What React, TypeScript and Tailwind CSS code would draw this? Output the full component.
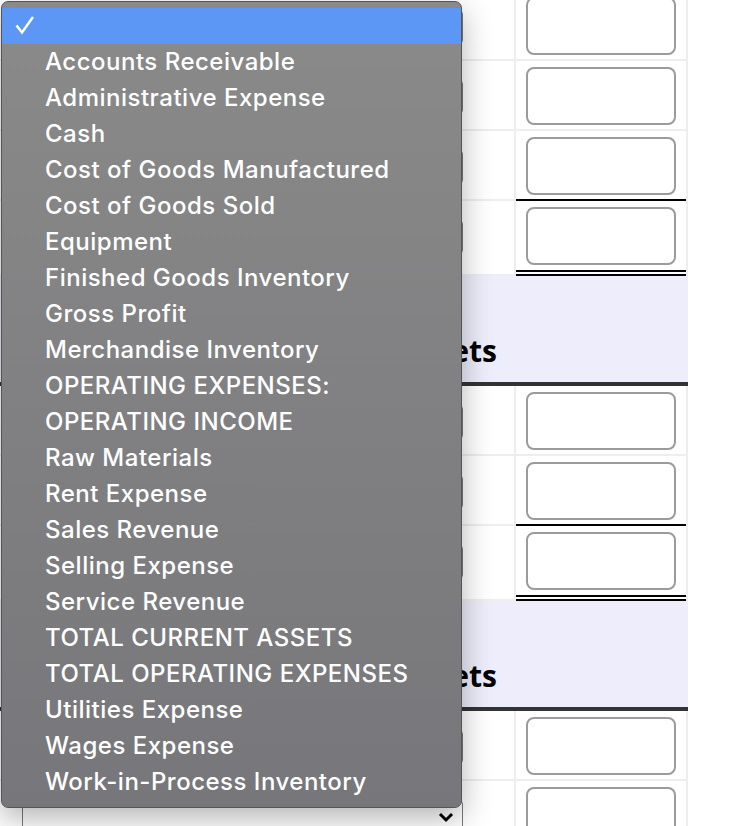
import React from 'react';

const options = [
    'Accounts Receivable',
    'Administrative Expense',
    'Cash',
    'Cost of Goods Manufactured',
    'Cost of Goods Sold',
    'Equipment',
    'Finished Goods Inventory',
    'Gross Profit',
    'Merchandise Inventory',
    'OPERATING EXPENSES:',
    'OPERATING INCOME',
    'Raw Materials',
    'Rent Expense',
    'Sales Revenue',
    'Selling Expense',
    'Service Revenue',
    'TOTAL CURRENT ASSETS',
    'TOTAL OPERATING EXPENSES',
    'Utilities Expense',
    'Wages Expense',
    'Work-in-Process Inventory',
];

type Line = 'none' | 'single' | 'double';

function Select() {
    return (
        <div className="w-[441px] h-[34px] border border-[#7a7a7a] rounded-[4px] bg-white flex items-center justify-end pr-[8px]">
            <svg width="16" height="12" viewBox="0 0 16 12">
                <polyline points="2,3 8,9 14,3" fill="none" stroke="#000" strokeWidth="3" />
            </svg>
        </div>
    );
}

function Row({ line }: { line: Line }) {
    let right = 'h-[70px] border-b-2 border-[#eeeeee]';
    if (line === 'single') right = 'h-[70px] border-b-2 border-black';
    if (line === 'double') right = 'h-[75px] border-b-[6px] border-double border-black';

    return (
        <div className="flex">
            <div className="w-[514px] border-b-2 border-[#eeeeee] pt-[19px] pl-[22px]">
                <Select />
            </div>
            <div className="w-[2px] bg-[#eeeeee]" />
            <div className={`w-[170px] ${right} pt-[6px] pl-[10px]`}>
                <div className="w-[150px] h-[58px] border-2 border-[#9b9b9b] rounded-lg bg-white" />
            </div>
            <div className="w-[2px] bg-[#eeeeee]" />
        </div>
    );
}

function Header({ title }: { title: string }) {
    return (
        <div className="flex w-[688px] h-[110px] bg-[#ededfb] border-b-4 border-[#333333]">
            <div className="w-[514px] flex items-end justify-end pr-[17px] pb-[16px]">
                <span className="text-[30px] leading-none font-bold text-black whitespace-nowrap" style={{ fontFamily: '"Open Sans", sans-serif' }}>
                    {title}
                </span>
            </div>
        </div>
    );
}

export default function App() {
    return (
        <div className="relative w-[750px] h-[826px] overflow-hidden bg-white">
            <div className="-mt-[9px]">
                <Row line="none" />
                <Row line="none" />
                <Row line="single" />
                <Row line="double" />
                <Header title="Current Assets" />
                <Row line="none" />
                <Row line="single" />
                <Row line="double" />
                <Header title="Long-term Assets" />
                <Row line="none" />
                <Row line="none" />
            </div>

            {/* open dropdown list over the first column */}
            <div
                className="absolute top-[1px] left-[1px] w-[461px] h-[807px] rounded-[7px] border border-[#555555] bg-gradient-to-b from-[#8a8a8a] to-[#77777b] shadow-[0_10px_30px_rgba(0,0,0,0.3)] pt-[6px] overflow-hidden"
                style={{ fontFamily: 'Inter, "Liberation Sans", sans-serif' }}
            >
                <div className="h-[36px] bg-[#5c97f6] flex items-center pl-[13px]">
                    <svg width="20" height="20" viewBox="0 0 20 20">
                        <polyline points="1.5,9.5 7,16.5 18,1" fill="none" stroke="#fff" strokeWidth="2.5" />
                    </svg>
                </div>
                {options.map((o) => (
                    <div key={o} className="h-[36px] leading-[36px] pl-[43px] text-[24px] font-medium tracking-[0.5px] text-white whitespace-nowrap">
                        {o}
                    </div>
                ))}
            </div>
        </div>
    );
}
